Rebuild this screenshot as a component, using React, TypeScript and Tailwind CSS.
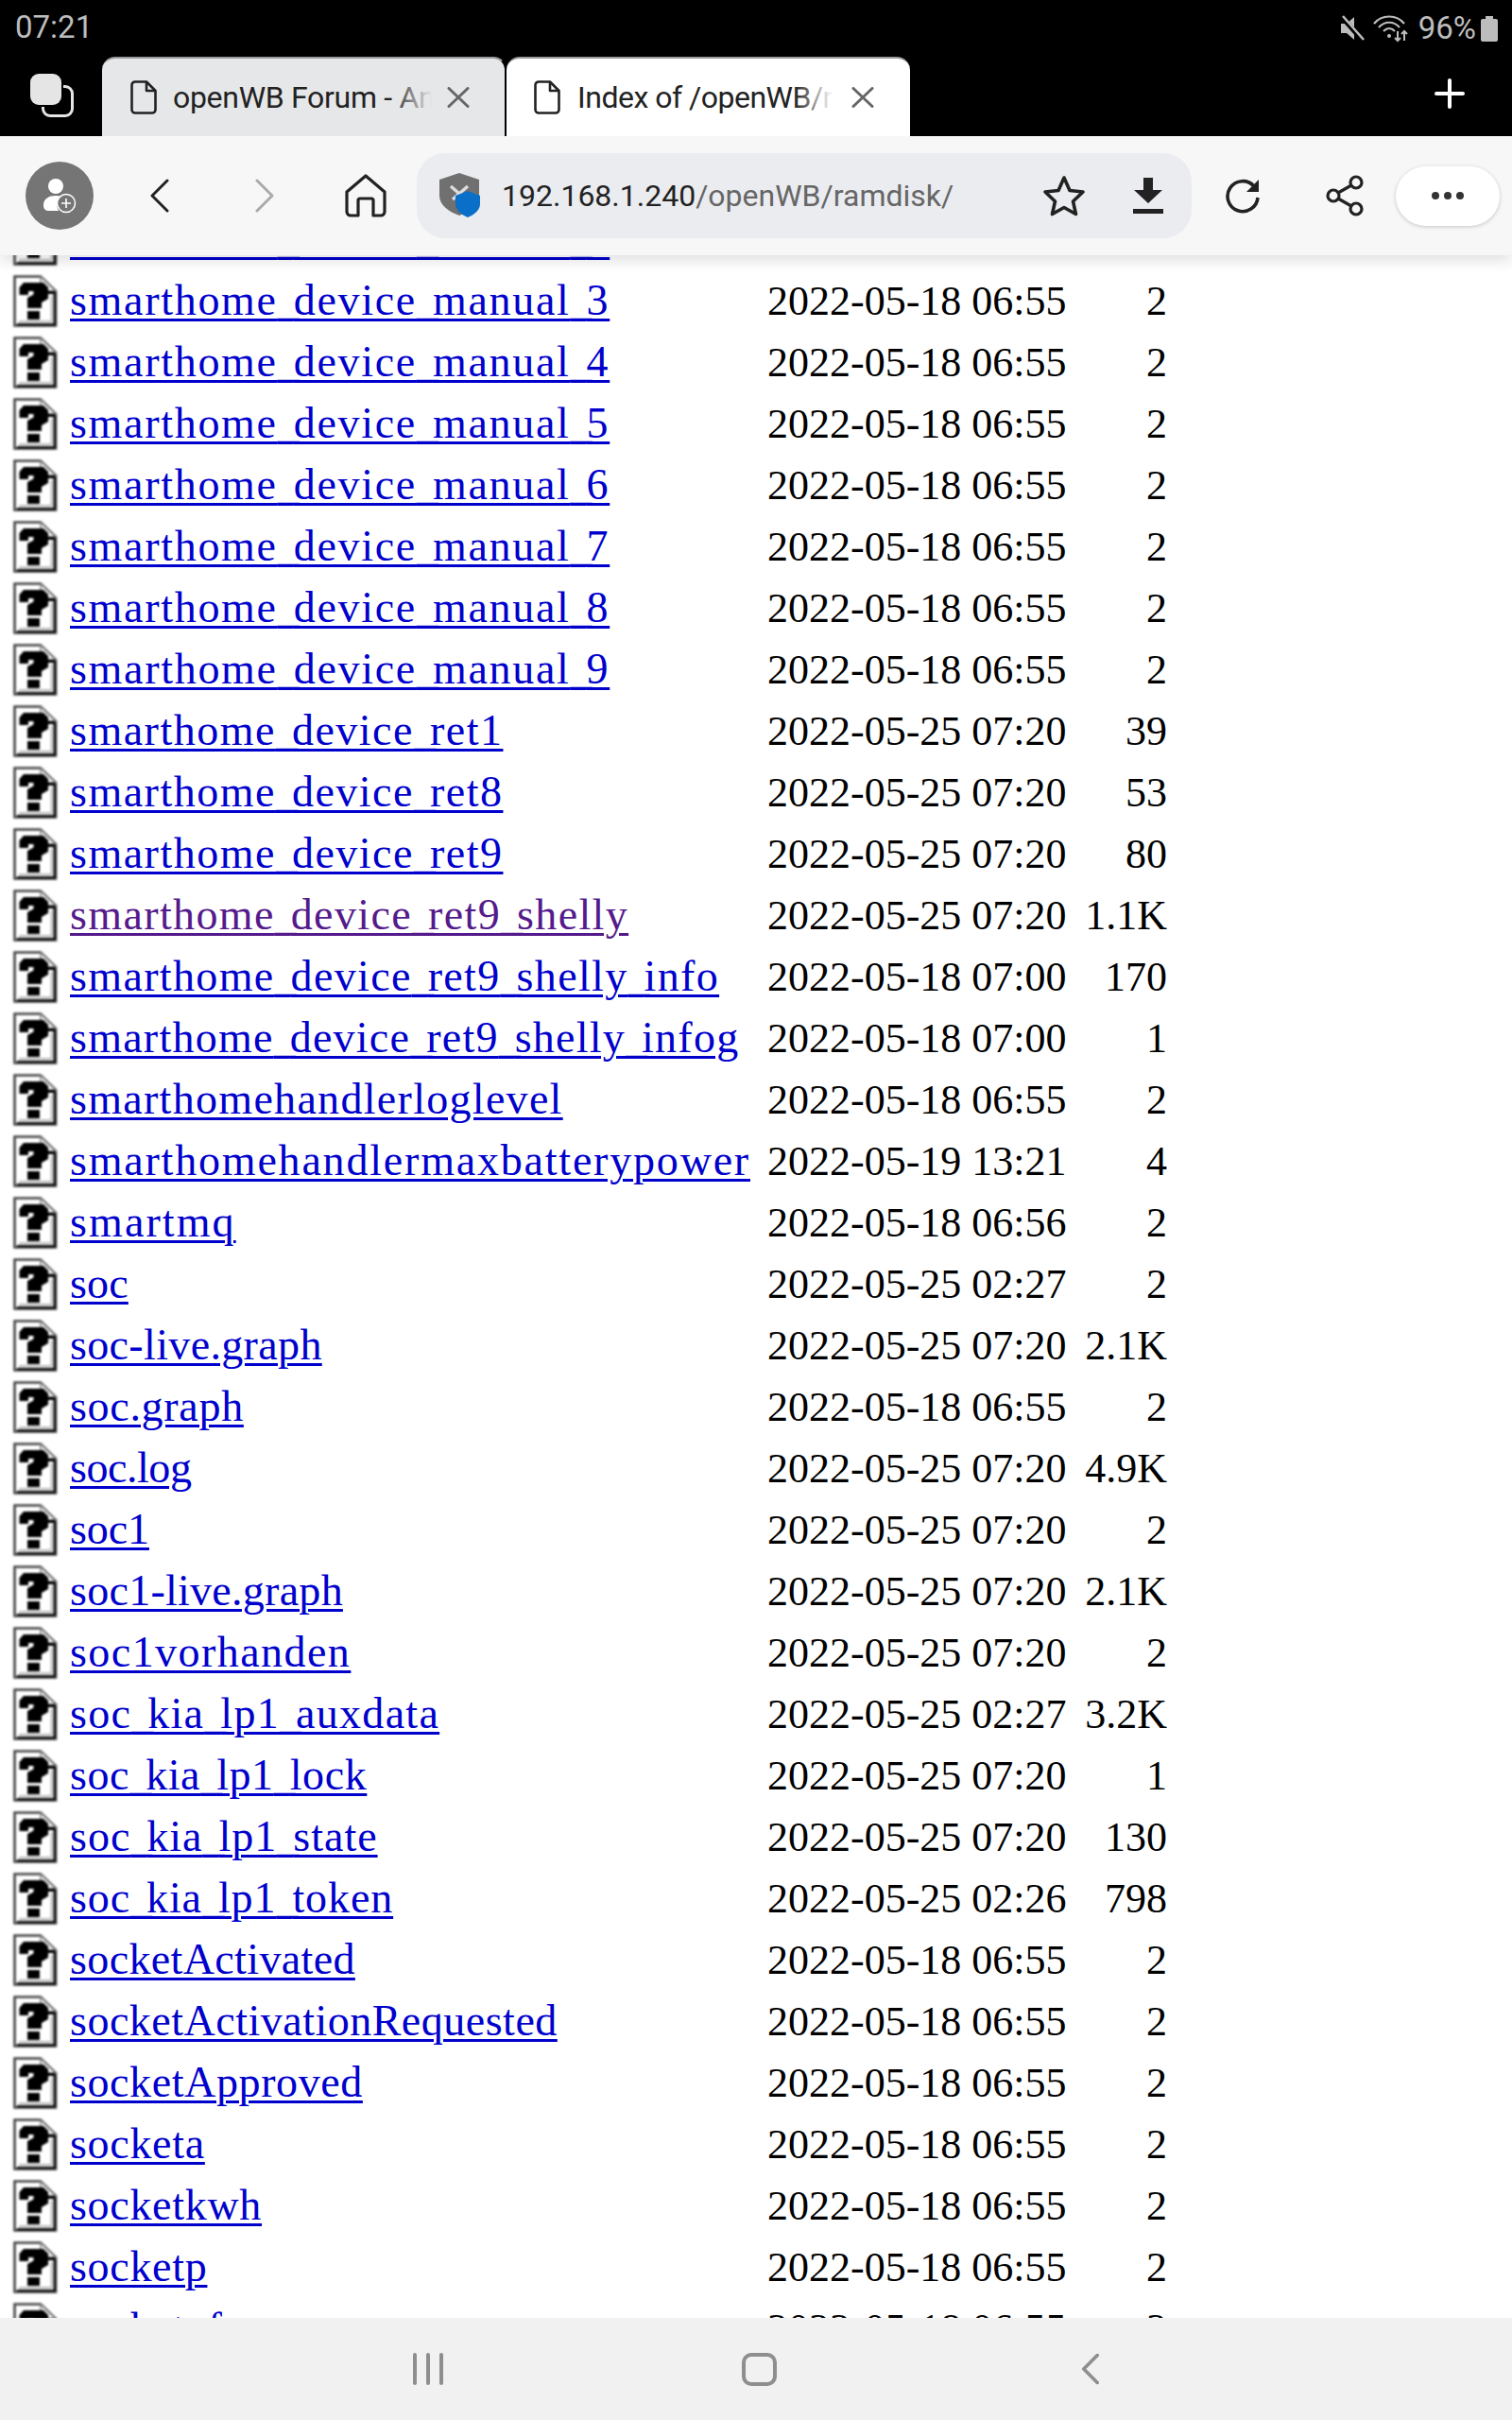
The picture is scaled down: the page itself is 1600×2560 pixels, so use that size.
const d18 = "2022-05-18 06:55"
const d25 = "2022-05-25 07:20"

// track: the original font has wider letters than Liberation Serif, tuned per name
const rows = [
  { name: "smarthome_device_manual_2", date: d18, size: "2", track: "tracking-[1.7px]" },
  { name: "smarthome_device_manual_3", date: d18, size: "2", track: "tracking-[1.7px]" },
  { name: "smarthome_device_manual_4", date: d18, size: "2", track: "tracking-[1.7px]" },
  { name: "smarthome_device_manual_5", date: d18, size: "2", track: "tracking-[1.7px]" },
  { name: "smarthome_device_manual_6", date: d18, size: "2", track: "tracking-[1.7px]" },
  { name: "smarthome_device_manual_7", date: d18, size: "2", track: "tracking-[1.7px]" },
  { name: "smarthome_device_manual_8", date: d18, size: "2", track: "tracking-[1.7px]" },
  { name: "smarthome_device_manual_9", date: d18, size: "2", track: "tracking-[1.7px]" },
  { name: "smarthome_device_ret1", date: d25, size: "39", track: "tracking-[1.5px]" },
  { name: "smarthome_device_ret8", date: d25, size: "53", track: "tracking-[1.5px]" },
  { name: "smarthome_device_ret9", date: d25, size: "80", track: "tracking-[1.5px]" },
  { name: "smarthome_device_ret9_shelly", date: d25, size: "1.1K", visited: true, track: "tracking-[1.37px]" },
  { name: "smarthome_device_ret9_shelly_info", date: "2022-05-18 07:00", size: "170", track: "tracking-[1.35px]" },
  { name: "smarthome_device_ret9_shelly_infog", date: "2022-05-18 07:00", size: "1", track: "tracking-[1.25px]" },
  { name: "smarthomehandlerloglevel", date: d18, size: "2", track: "tracking-[1.3px]" },
  { name: "smarthomehandlermaxbatterypower", date: "2022-05-19 13:21", size: "4", track: "tracking-[1.8px]" },
  { name: "smartmq", date: "2022-05-18 06:56", size: "2", track: "tracking-[2.1px]" },
  { name: "soc", date: "2022-05-25 02:27", size: "2", track: "tracking-[0.15px]" },
  { name: "soc-live.graph", date: d25, size: "2.1K", track: "tracking-[0.35px]" },
  { name: "soc.graph", date: d18, size: "2", track: "tracking-[0.7px]" },
  { name: "soc.log", date: d25, size: "4.9K", track: "tracking-[-0.45px]" },
  { name: "soc1", date: d25, size: "2", track: "tracking-[-0.1px]" },
  { name: "soc1-live.graph", date: d25, size: "2.1K", track: "tracking-[0.27px]" },
  { name: "soc1vorhanden", date: d25, size: "2", track: "tracking-[1.45px]" },
  { name: "soc_kia_lp1_auxdata", date: "2022-05-25 02:27", size: "3.2K", track: "tracking-[1.3px]" },
  { name: "soc_kia_lp1_lock", date: d25, size: "1", track: "tracking-[0.6px]" },
  { name: "soc_kia_lp1_state", date: d25, size: "130", track: "tracking-[1px]" },
  { name: "soc_kia_lp1_token", date: "2022-05-25 02:26", size: "798", track: "tracking-[0.9px]" },
  { name: "socketActivated", date: d18, size: "2", track: "tracking-[0.37px]" },
  { name: "socketActivationRequested", date: d18, size: "2", track: "tracking-[0.5px]" },
  { name: "socketApproved", date: d18, size: "2", track: "tracking-[0.6px]" },
  { name: "socketa", date: d18, size: "2", track: "tracking-[0.7px]" },
  { name: "socketkwh", date: d18, size: "2", track: "tracking-[0.7px]" },
  { name: "socketp", date: d18, size: "2", track: "tracking-[0.7px]" },
  { name: "socketpf", date: d18, size: "2", track: "tracking-[0.7px]" },
]

const UnknownIcon = () => (
  <svg width="48" height="56" viewBox="0 0 48 56" className="blur-[0.8px] ml-[14px] mt-[5px]">
    <path d="M1.5 1.5H29L45 17V53.5H1.5Z" fill="#fff" stroke="#444" strokeWidth="2.6" />
    <path d="M29 1.5V17H45Z" fill="#f4f4f4" stroke="#777" strokeWidth="1.4" />
    <path d="M42.5 19V51H4V53.5H45V19Z" fill="#111" />
    <path d="M39.5 22V48H6V50H41.5V22Z" fill="#bbb" />
    <path d="M6.5 21V13L11 8H32L37 13V25L30 29V35H15V24L21.5 20.5V17H16V21Z" fill="#000" />
    <path d="M35 17H44V20H35Z" fill="#000" />
    <path d="M15 38H28V47H15Z" fill="#000" />
  </svg>
)

const FileIcon = () => (
  <svg width="28" height="36" viewBox="0 0 28 36" fill="none" stroke="#222" strokeWidth="2.6" strokeLinejoin="round">
    <path d="M5 1.5H17L26.5 11V31a3.5 3.5 0 0 1-3.5 3.5H5A3.5 3.5 0 0 1 1.5 31V5A3.5 3.5 0 0 1 5 1.5Z" />
    <path d="M17 1.5V11H26.5" />
  </svg>
)

const CloseIcon = () => (
  <svg width="24" height="22" viewBox="0 0 24 22" stroke="#666" strokeWidth="3" strokeLinecap="round">
    <path d="M2 1.5L22 20.5M22 1.5L2 20.5" />
  </svg>
)

const Chevron = ({ flip, color, w = 20, h = 36, sw = 3 }: { flip?: boolean; color: string; w?: number; h?: number; sw?: number }) => (
  <svg width={w} height={h} viewBox="0 0 20 36" fill="none" stroke={color} strokeWidth={sw} strokeLinecap="round" strokeLinejoin="round">
    <path d={flip ? "M2 2L18 18L2 34" : "M18 2L2 18L18 34"} />
  </svg>
)

export default function App() {
  return (
    <div className="w-[1600px] h-[2560px] flex flex-col bg-white overflow-hidden font-['Roboto',sans-serif]">
      <header className="relative z-10 flex flex-col shadow-[0_6px_14px_rgba(0,0,0,0.12)]">
        <div className="h-[60px] bg-black flex items-center pl-[16px] pr-[15px] text-[#bdbdbd] text-[33px]">
          <span className="mt-[-2px]">07:21</span>
          <div className="ml-auto flex items-center">
            <svg width="26" height="28" viewBox="0 0 26 28" fill="#bdbdbd">
              <path d="M1 9H7L15 2V26L7 19H1Z" />
              <path d="M2 2L24 27" stroke="#000" strokeWidth="5" />
              <path d="M3 1L25 26" stroke="#bdbdbd" strokeWidth="2.6" />
            </svg>
            <svg width="38" height="30" viewBox="0 0 38 30" fill="none" stroke="#bdbdbd" strokeWidth="2.2" className="ml-[9px]">
              <path d="M1 10C9 0 25 0 33 10" />
              <path d="M6 14C12 7 22 7 28 14" />
              <path d="M11 18C15 14 19 14 23 18" />
              <circle cx="17" cy="23" r="2" fill="#bdbdbd" stroke="none" />
              <path d="M26 18V28M23 25L26 28L29 25M33 28V18M30 21L33 18L36 21" strokeWidth="2" />
            </svg>
            <span className="ml-[10px]">96%</span>
            <div className="ml-[5px] flex flex-col items-center">
              <div className="w-[8px] h-[3px] bg-[#bdbdbd]" />
              <div className="w-[18px] h-[24px] bg-[#bdbdbd] rounded-[2px]" />
            </div>
          </div>
        </div>

        <div className="h-[84px] bg-black flex">
          <div className="w-[108px] flex items-center pl-[32px]">
            <div className="relative w-[46px] h-[46px] mt-[-2px]">
              <div className="absolute right-0 bottom-0 w-[34px] h-[34px] border-[3px] border-[#e5e5e5] rounded-[9px]" />
              <div className="absolute left-0 top-0 w-[33px] h-[33px] bg-[#e5e5e5] rounded-[9px] shadow-[0_0_0_2px_#000]" />
            </div>
          </div>
          <div className="w-[428px] bg-[#e6e7e9] rounded-t-[14px] border-t-2 border-[#9a9a9a] border-r-2 border-r-black flex items-center pl-[30px]">
            <FileIcon />
            <div className="relative ml-[17px] w-[274px] overflow-hidden whitespace-nowrap text-[32px] text-[#222] tracking-[-0.3px]">
              openWB Forum - An
              <div className="absolute right-0 top-0 bottom-0 w-[44px] bg-gradient-to-r from-transparent to-[#e6e7e9]" />
            </div>
            <div className="ml-[16px]"><CloseIcon /></div>
          </div>
          <div className="w-[427px] bg-white rounded-t-[14px] border-t-2 border-[#9a9a9a] flex items-center pl-[29px]">
            <FileIcon />
            <div className="relative ml-[18px] w-[270px] overflow-hidden whitespace-nowrap text-[32px] text-[#222] tracking-[-0.5px]">
              Index of /openWB/r
              <div className="absolute right-0 top-0 bottom-0 w-[40px] bg-gradient-to-r from-transparent to-white" />
            </div>
            <div className="ml-[20px]"><CloseIcon /></div>
          </div>
          <div className="flex-1 flex items-center justify-end pr-[50px] pb-[6px]">
            <svg width="32" height="32" viewBox="0 0 32 32" stroke="#fff" strokeWidth="4" strokeLinecap="round">
              <path d="M16 2V30M2 16H30" />
            </svg>
          </div>
        </div>

        <div className="h-[126px] bg-[#f7f7f7] flex items-center pl-[27px]">
          <div className="w-[72px] h-[72px] rounded-full bg-[#757575] flex items-center justify-center">
            <svg width="36" height="38" viewBox="0 0 36 38">
              <circle cx="14" cy="9" r="8" fill="#fff" />
              <path d="M1 29C1 22 7 19 14 19C16 19 18 19 20 20C15 23 14 30 17 35H7C3 35 1 33 1 29Z" fill="#fff" />
              <circle cx="25" cy="27" r="9.5" fill="none" stroke="#fff" strokeWidth="1.5" />
              <path d="M25 22V32M20 27H30" stroke="#fff" strokeWidth="1.6" />
            </svg>
          </div>
          <div className="ml-[60px]"><Chevron color="#222" /></div>
          <div className="ml-[91px]"><Chevron flip color="#aaa" /></div>
          <svg width="44" height="46" viewBox="0 0 44 46" fill="none" stroke="#222" strokeWidth="3.2" strokeLinejoin="round" className="ml-[75px]">
            <path d="M2 19L22 2L42 19V40A4 4 0 0 1 38 44H30V28A2 2 0 0 0 28 26H16A2 2 0 0 0 14 28V44H6A4 4 0 0 1 2 40Z" />
          </svg>
          <div className="ml-[32px] w-[820px] h-[90px] bg-[#ebecf0] rounded-[30px] flex items-center pl-[24px]">
            <svg width="46" height="48" viewBox="0 0 46 48">
              <path d="M21 0L42 7V24C42 34 32 41 21 45C10 41 0 34 0 24V7Z" fill="#707070" />
              <path d="M12 14L28 28M30 14L14 28" stroke="#ddd" strokeWidth="3.4" />
              <path d="M30 19L43 24V33C43 39 37 44 30 47C23 44 17 39 17 33V24Z" fill="#0a6fc9" />
            </svg>
            <span className="ml-[20px] text-[32px] text-[#222]">
              192.168.1.240<span className="text-[#666]">/openWB/ramdisk/</span>
            </span>
            <svg width="46" height="44" viewBox="0 0 46 44" fill="none" stroke="#222" strokeWidth="3.6" strokeLinejoin="round" className="ml-[94px]">
              <path d="M23 3L29 16.5L43 18L32.5 28L35.5 41.5L23 34.5L10.5 41.5L13.5 28L3 18L17 16.5Z" />
            </svg>
            <svg width="32" height="38" viewBox="0 0 32 38" fill="#222" className="ml-[50px]">
              <path d="M11 0H21V13H31L16 27L1 13H11Z" />
              <path d="M0 33H32V38H0Z" />
            </svg>
          </div>
          <svg width="38" height="38" viewBox="0 0 38 38" fill="none" className="ml-[35px]">
            <path d="M31 9A16 16 0 1 0 35 21" stroke="#222" strokeWidth="3.6" />
            <path d="M36 2V15H23Z" fill="#222" />
          </svg>
          <svg width="40" height="44" viewBox="0 0 40 44" fill="none" stroke="#222" strokeWidth="3.2" className="ml-[69px]">
            <circle cx="32" cy="8" r="6" />
            <circle cx="8" cy="22" r="6" />
            <circle cx="32" cy="36" r="6" />
            <path d="M13 19L27 11M13 25L27 33" />
          </svg>
          <div className="ml-[34px] w-[110px] h-[63px] bg-white rounded-full shadow-[0_1px_4px_rgba(0,0,0,0.2)] flex items-center justify-center gap-[5px]">
            <div className="w-[8px] h-[8px] rounded-full bg-[#333]" />
            <div className="w-[8px] h-[8px] rounded-full bg-[#333]" />
            <div className="w-[8px] h-[8px] rounded-full bg-[#333]" />
          </div>
        </div>
      </header>

      <main className="flex-1 overflow-hidden font-['Liberation_Serif',serif]">
        <div className="mt-[-49px]">
          {rows.map(row => (
            <div key={row.name} className="grid grid-cols-[74px_738px_316px_107px] h-[65px] leading-[65px] whitespace-nowrap">
              <UnknownIcon />
              <div className="mt-[-1px]">
                <a
                  href="#"
                  className={`text-[46px] ${row.track} underline decoration-[3px] underline-offset-[4px] ${row.visited ? "text-[#551a8b]" : "text-[#0000cd]"}`}
                >
                  {row.name.split("_").map((part, i) => (
                    <span key={i}>
                      {i > 0 && <span className="tracking-[-6px]">_</span>}
                      {part}
                    </span>
                  ))}
                </a>
              </div>
              <div className="text-[44px] text-black">{row.date}</div>
              <div className="text-[44px] text-black text-right">{row.size}</div>
            </div>
          ))}
        </div>
      </main>

      <nav className="h-[108px] bg-[#f1f1f1] flex items-center pl-[437px]">
        <div className="flex gap-[10px]">
          <div className="w-[4px] h-[34px] bg-[#8e8e8e] rounded-full" />
          <div className="w-[4px] h-[34px] bg-[#8e8e8e] rounded-full" />
          <div className="w-[4px] h-[34px] bg-[#8e8e8e] rounded-full" />
        </div>
        <div className="ml-[316px] w-[37px] h-[35px] border-[4px] border-[#8e8e8e] rounded-[10px]" />
        <div className="ml-[323px]"><Chevron color="#8e8e8e" w={18} h={34} sw={4} /></div>
      </nav>
    </div>
  )
}
